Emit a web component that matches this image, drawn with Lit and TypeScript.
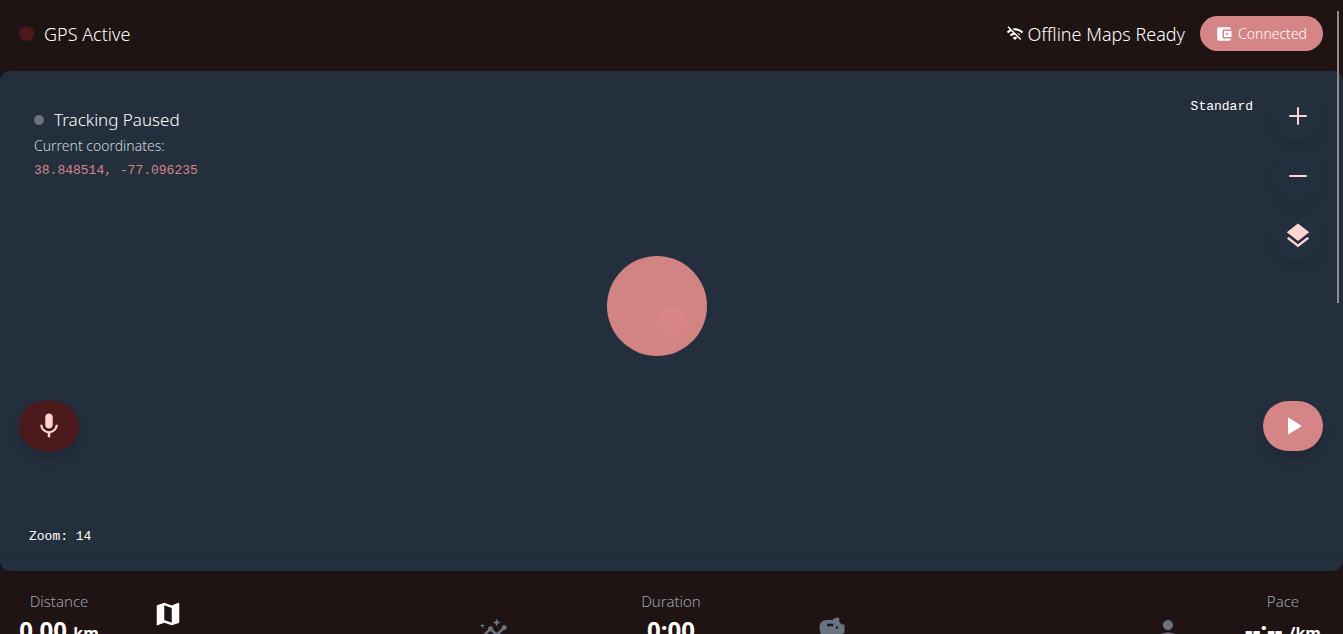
import { LitElement, html, css, svg } from "lit";
import { customElement, property } from "lit/decorators.js";

const ICONS: Record<string, string> = {
  wifiOff:
    "M22.99 9C19.15 5.16 13.8 3.76 8.84 4.78l2.52 2.52c3.47-.17 6.99 1.05 9.63 3.7l2-2zm-4 4c-1.29-1.29-2.84-2.13-4.49-2.56l3.53 3.53.96-.97zM2 3.05 5.07 6.1C3.6 6.82 2.22 7.78 1 9l1.99 2c1.24-1.24 2.67-2.16 4.2-2.77l2.24 2.24C7.81 10.89 6.27 11.73 5 13v.01L6.99 15c1.36-1.36 3.14-2.04 4.92-2.06L18.98 20l1.27-1.26L3.29 1.79 2 3.05zM9 17l3 3 3-3c-1.65-1.66-4.34-1.66-6 0z",
  wallet:
    "M21 18v1c0 1.1-.9 2-2 2H5c-1.11 0-2-.9-2-2V5c0-1.1.89-2 2-2h14c1.1 0 2 .9 2 2v1h-9c-1.11 0-2 .9-2 2v8c0 1.1.89 2 2 2h9zm-9-2h10V8H12v8zm4-2.5c-.83 0-1.5-.67-1.5-1.5s.67-1.5 1.5-1.5 1.5.67 1.5 1.5-.67 1.5-1.5 1.5z",
  add: "M19 12.8h-6.2V19h-1.6v-6.2H5v-1.6h6.2V5h1.6v6.2H19z",
  remove: "M19 12.8H5v-1.6h14z",
  layers:
    "m11.99 18.54-7.37-5.73L3 14.07l9 7 9-7-1.63-1.27-7.38 5.74zM12 16l7.36-5.73L21 9l-9-7-9 7 1.63 1.27L12 16z",
  mic: "M12 14c1.66 0 2.99-1.34 2.99-3L15 5c0-1.66-1.34-3-3-3S9 3.34 9 5v6c0 1.66 1.34 3 3 3zm5.3-3c0 3-2.54 5.1-5.3 5.1S6.7 14 6.7 11H5c0 3.41 2.72 6.23 6 6.72V21h2v-3.28c3.28-.48 6-3.3 6-6.72h-1.7z",
  play: "M8 5v14l11-7z",
  map: "m20.5 3-.16.03L15 5.1 9 3 3.36 4.9c-.21.07-.36.25-.36.48V20.5c0 .28.22.5.5.5l.16-.03L9 18.9l6 2.1 5.64-1.9c.21-.07.36-.25.36-.48V3.5c0-.28-.22-.5-.5-.5zM15 19l-6-2.11V5l6 2.11V19z",
  insights:
    "M21 8c-1.45 0-2.26 1.44-1.93 2.51l-3.55 3.56c-.3-.09-.74-.09-1.04 0l-2.55-2.55C12.27 10.45 11.46 9 10 9c-1.45 0-2.27 1.44-1.93 2.52l-4.56 4.55C2.44 15.74 1 16.55 1 18c0 1.1.9 2 2 2 1.45 0 2.26-1.44 1.93-2.51l4.55-4.56c.3.09.74.09 1.04 0l2.55 2.55C12.73 16.55 13.54 18 15 18c1.45 0 2.27-1.44 1.93-2.52l3.56-3.55C21.56 12.26 23 11.45 23 10c0-1.1-.9-2-2-2zM15 9l.94-2.07L18 6l-2.06-.93L15 3l-.92 2.07L12 6l2.08.93zM3.5 11 4 9l2-.5L4 8l-.5-2L3 8l-2 .5L3 9z",
  savings:
    "m19.83 7.5-2.27-2.27c.07-.42.18-.81.32-1.15.08-.18.12-.37.12-.58 0-.83-.67-1.5-1.5-1.5-1.64 0-3.09.79-4 2h-5C4.46 4 2 6.46 2 9.5S4.5 21 4.5 21H10v-2h2v2h5.5l1.68-5.59 2.82-.94V7.5h-2.17zM13 9H8V7h5v2zm3 2c-.55 0-1-.45-1-1s.45-1 1-1 1 .45 1 1-.45 1-1 1z",
  person:
    "M12 12c2.21 0 4-1.79 4-4s-1.79-4-4-4-4 1.79-4 4 1.79 4 4 4zm0 2c-2.67 0-8 1.34-8 4v2h16v-2c0-2.66-5.33-4-8-4z",
};

@customElement("app-icon")
class AppIcon extends LitElement {
  static styles = css`
    :host { display: inline-flex; flex: none; }
    svg { display: block; fill: currentColor; }
  `;
  @property() name = "map";
  @property({ type: Number }) size = 24;
  render() {
    return html`<svg width=${this.size} height=${this.size} viewBox="0 0 24 24" aria-hidden="true">
      ${svg`<path d=${ICONS[this.name]}></path>`}
    </svg>`;
  }
}

@customElement("app-root")
class AppRoot extends LitElement {
  static styles = css`
    :host {
      display: block;
      position: relative;
      height: 100vh;
      overflow: hidden;
      background: #1f1314;
      color: #fff;
      font: 300 18px/24px "Noto Sans", "Open Sans", sans-serif;
    }
    * { box-sizing: border-box; }
    button { font: inherit; color: inherit; border: 0; padding: 0; margin: 0; cursor: pointer; background: none; }
    .header { display: flex; justify-content: space-between; align-items: center; padding: 16px 20px 20px 19px; }
    .status, .offline, .header-right { display: flex; align-items: center; }
    .status { gap: 10px; }
    .dot { width: 15px; height: 15px; border-radius: 50%; background: #4b181c; }
    .header-right { gap: 15px; }
    .offline { gap: 4px; }
    .connected {
      display: flex; align-items: center; gap: 5px; height: 35px; padding: 0 16px 0 15px;
      border-radius: 20px; background: #d68586; font-size: 14px;
    }
    .map { position: relative; height: 500px; border-radius: 10px; background: #242f3d; overflow: hidden; }
    .tracking { position: absolute; left: 34px; top: 37px; }
    .tracking-title { display: flex; align-items: center; gap: 10px; margin-bottom: 2px; font-size: 17px; }
    .tracking-dot { width: 10px; height: 10px; border-radius: 50%; background: #6b7280; }
    .caption { font-size: 14px; line-height: 24px; color: #d1d5db; }
    .mono { font: 13px/26px "Liberation Mono", monospace; }
    .coords { color: #d68586; }
    .layer-name { position: absolute; right: 90px; top: 23px; }
    .zoom-level { position: absolute; left: 29px; bottom: 21px; }
    .controls { position: absolute; right: 20px; top: 20px; display: grid; gap: 10px; }
    .control, .fab { display: grid; place-items: center; height: 50px; }
    .control { width: 50px; border-radius: 50%; color: #ffd5d3; box-shadow: 0 7px 10px rgba(0, 0, 0, 0.08); background: #242f3d; }
    .fab { position: absolute; top: 330px; width: 60px; border-radius: 25px; box-shadow: 0 7px 12px rgba(0, 0, 0, 0.15); }
    .mic { left: 19px; background: #4b181c; color: #ffd5d3; }
    .play { right: 20px; background: #d68586; }
    .marker { position: absolute; left: 50%; top: 50%; width: 30px; height: 30px; margin: -15px; border-radius: 50%; background: #d68586; }
    .pulse { position: absolute; left: -50px; top: -50px; width: 100px; height: 100px; border-radius: 50%; background: #d68586; opacity: 0.98; }
    .edge { position: absolute; left: 0; right: 0; bottom: 12px; height: 1px; background: #202a36; }
    .stats { display: flex; justify-content: space-between; padding: 20px 20px 20px 19px; }
    .stat { min-width: 80px; text-align: center; }
    .label { font-size: 15px; line-height: 20px; color: #9ca3af; }
    .value { font-size: 24px; line-height: 38px; font-weight: 700; }
    .unit { font-size: 16px; }
    .nav { position: absolute; left: 0; right: 0; top: 599px; padding-left: 20px; display: grid; grid-template-columns: 295fr 356fr 322fr 350fr; }
    .nav-item { display: grid; justify-items: center; padding-top: 16px; color: #6b7280; }
    .active { padding-top: 0; align-content: start; color: #fff; }
    .thumb { position: absolute; right: 4px; top: 11px; width: 2px; height: 292px; background: #8f8b8b; }
  `;

  render() {
    return html`
      <header class="header">
        <div class="status"><span class="dot"></span><span>GPS Active</span></div>
        <div class="header-right">
          <div class="offline"><app-icon name="wifiOff" size="18"></app-icon><span>Offline Maps Ready</span></div>
          <button class="connected"><app-icon name="wallet" size="18"></app-icon>Connected</button>
        </div>
      </header>
      <main class="map">
        <div class="edge"></div>
        <div class="marker"><div class="pulse"></div></div>
        <section class="tracking">
          <div class="tracking-title"><span class="tracking-dot"></span><span>Tracking Paused</span></div>
          <div class="caption">Current coordinates:</div>
          <div class="mono coords">38.848514, -77.096235</div>
        </section>
        <div class="mono layer-name">Standard</div>
        <div class="controls">
          <button class="control" aria-label="Zoom in"><app-icon name="add" size="30"></app-icon></button>
          <button class="control" aria-label="Zoom out"><app-icon name="remove" size="30"></app-icon></button>
          <button class="control" aria-label="Layers"><app-icon name="layers" size="30"></app-icon></button>
        </div>
        <button class="fab mic" aria-label="Voice command"><app-icon name="mic" size="30"></app-icon></button>
        <button class="fab play" aria-label="Start tracking"><app-icon name="play" size="30"></app-icon></button>
        <div class="mono zoom-level">Zoom: 14</div>
      </main>
      <section class="stats">
        ${[
          ["Distance", "0.00", "km"],
          ["Duration", "0:00", ""],
          ["Pace", "--:--", "/km"],
        ].map(
          ([label, value, unit]) => html`<div class="stat">
            <div class="label">${label}</div>
            <div class="value">${value}${unit ? html` <span class="unit">${unit}</span>` : ""}</div>
          </div>`
        )}
      </section>
      <nav class="nav">
        <button class="nav-item active" aria-label="Map"><app-icon name="map" size="30"></app-icon></button>
        <button class="nav-item" aria-label="Insights"><app-icon name="insights" size="30"></app-icon></button>
        <button class="nav-item" aria-label="Savings"><app-icon name="savings" size="30"></app-icon></button>
        <button class="nav-item" aria-label="Profile"><app-icon name="person" size="30"></app-icon></button>
      </nav>
      <div class="thumb"></div>
    `;
  }
}
